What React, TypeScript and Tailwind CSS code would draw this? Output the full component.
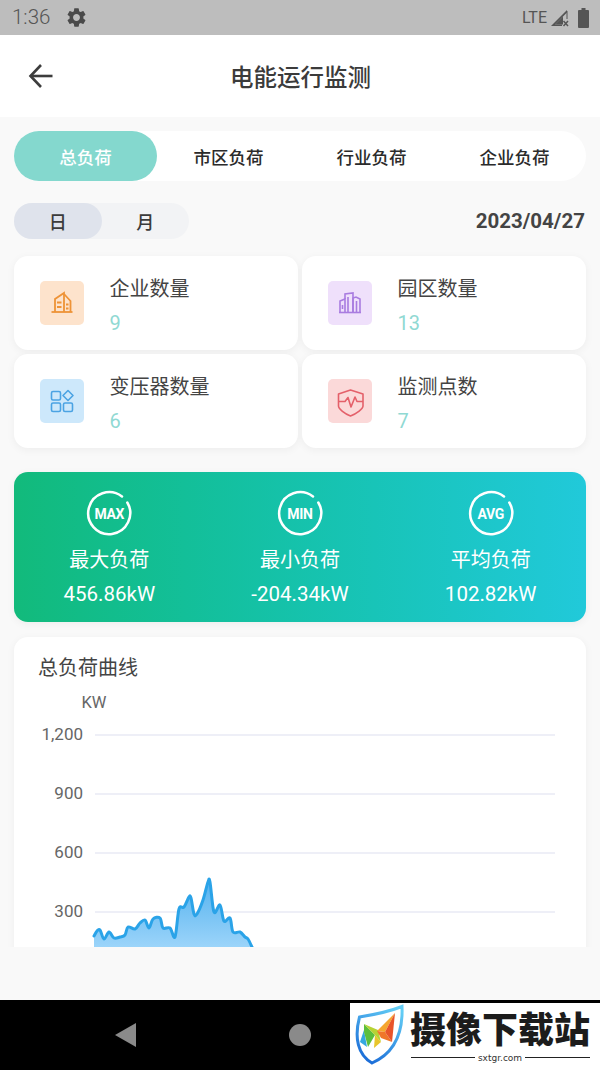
import React from 'react';
import { MdSettings } from 'react-icons/md';

const FONT = "font-['Roboto','Noto_Sans_CJK_SC',sans-serif]";

const tabs = ['总负荷', '市区负荷', '行业负荷', '企业负荷'];

const BuildingIcon = () => (
  <svg width="44" height="44" viewBox="0 0 44 44" fill="none" stroke="#ee9337" strokeWidth="1.800">
    <path d="M11.500 31h21" />
    <path d="M15 31V18l9-6v19" />
    <path d="M24 13l6.500 7v11" />
    <path d="M17 21.500h4.500M17 26h4.500M26 23.500h2.500M26 27.500h2.500" />
  </svg>
);

const CityIcon = () => (
  <svg width="44" height="44" viewBox="0 0 44 44" fill="none" stroke="#a97ce0" strokeWidth="1.600">
    <path d="M11 31.500h22" />
    <path d="M12 31V20l5-2v13" />
    <path d="M17 18v-5l8-1v19" />
    <path d="M25 31V17l3-1 4 2v13" />
    <path d="M14.500 24v4M20 16v15M28.500 20v11" />
  </svg>
);

const GridIcon = () => (
  <svg width="44" height="44" viewBox="0 0 44 44" fill="none" stroke="#4ba3e3" strokeWidth="1.600">
    <rect x="11.500" y="12.500" width="9" height="8.500" rx="1.500" />
    <rect x="11.500" y="24" width="9" height="8.500" rx="1.500" />
    <rect x="23.500" y="24" width="9" height="8.500" rx="1.500" />
    <path d="M28 11.500l5 5-5 5-5-5z" strokeLinejoin="round" />
  </svg>
);

const ShieldIcon = () => (
  <svg width="44" height="44" viewBox="0 0 44 44" fill="none" stroke="#e4606a" strokeWidth="1.600" strokeLinejoin="round">
    <path d="M22.500 11l12.500 4v12c0 3-7 8-12.500 10C17 35 10.500 30 10.500 27V15z" />
    <path d="M11 22.500h6l3-4 3 9.500 4-10 2 4.500h6" />
  </svg>
);

const stats = [
  { label: '企业数量', value: '9', bg: 'bg-[#fde3cc]', icon: <BuildingIcon /> },
  { label: '园区数量', value: '13', bg: 'bg-[#efe0fb]', icon: <CityIcon /> },
  { label: '变压器数量', value: '6', bg: 'bg-[#cde8fb]', icon: <GridIcon /> },
  { label: '监测点数', value: '7', bg: 'bg-[#fbd9d9]', icon: <ShieldIcon /> },
];

const loads = [
  { tag: 'MAX', label: '最大负荷', value: '456.86kW' },
  { tag: 'MIN', label: '最小负荷', value: '-204.34kW' },
  { tag: 'AVG', label: '平均负荷', value: '102.82kW' },
];

const gridLines = [
  { y: 735, label: '1,200' },
  { y: 794, label: '900' },
  { y: 853, label: '600' },
  { y: 912, label: '300' },
];

// curve samples in page coordinates
const outline = [
  [94, 936], [97, 931], [100, 930], [104, 939], [109, 932], [114, 938], [120, 937], [125, 935], [128, 927],
  [135, 929], [140, 923], [145, 920], [149, 928], [153, 919], [160, 918], [163, 928], [170, 928], [175, 937],
  [179, 909], [184, 907], [189, 897], [191, 898], [194, 914], [197, 914], [203, 900], [208, 882], [210, 882],
  [214, 912], [220, 905], [224, 921], [230, 918], [233, 932], [240, 932], [245, 937], [248, 939], [252, 947],
];

const smooth = (pts: number[][]) => {
  let d = `M${pts[0][0]} ${pts[0][1]}`;
  for (let i = 0; i < pts.length - 1; i++) {
    const p0 = pts[Math.max(i - 1, 0)];
    const p1 = pts[i];
    const p2 = pts[i + 1];
    const p3 = pts[Math.min(i + 2, pts.length - 1)];
    const c1x = p1[0] + (p2[0] - p0[0]) / 6;
    const c1y = p1[1] + (p2[1] - p0[1]) / 6;
    const c2x = p2[0] - (p3[0] - p1[0]) / 6;
    const c2y = p2[1] - (p3[1] - p1[1]) / 6;
    d += ` C${c1x} ${c1y} ${c2x} ${c2y} ${p2[0]} ${p2[1]}`;
  }
  return d;
};

const linePath = smooth(outline);

const Ring = ({ tag }: { tag: string }) => (
  <div className="relative w-[46px] h-[46px] flex items-center justify-center">
    <svg className="absolute inset-0" width="46" height="46" viewBox="0 0 46 46" fill="none" stroke="#ffffff" strokeWidth="2.500" strokeLinecap="round">
      <path d="M36 6.500A21 21 0 1 0 41.300 12.500" />
    </svg>
    <span className="text-white text-[14px] font-bold leading-none tracking-[-0.3px] pt-[1px]">{tag}</span>
  </div>
);

export default function App() {
  return (
    <div className={`${FONT} relative w-[600px] h-[1070px] flex flex-col overflow-hidden bg-[#f9f9f9]`}>
      <div className="h-[35px] shrink-0 bg-[#bdbdbd] flex items-center pl-[12px] pr-[11px] text-[#555]">
        <span className="text-[20.500px] leading-none font-light">1:36</span>
        <MdSettings className="ml-[15px] w-[23px] h-[23px] text-[#4a4a4a]" />
        <span className="ml-auto text-[16px] leading-none">LTE</span>
        <svg className="ml-[3px]" width="20" height="20" viewBox="0 0 20 20" fill="#555">
          <path d="M1 18L17 2v2.500L5 16.500h7V18z" />
          <path d="M5 16.500L13 8.500v8z" />
          <path d="M17 3v8" stroke="#555" strokeWidth="1" />
          <path d="M13.500 13l4.500 5M18 13l-4.500 5" stroke="#555" strokeWidth="1.500" />
        </svg>
        <svg className="ml-[8px]" width="11" height="20" viewBox="0 0 11 20" fill="#555">
          <path d="M3.500 0h4v2H10a1 1 0 0 1 1 1v16a1 1 0 0 1-1 1H1a1 1 0 0 1-1-1V3a1 1 0 0 1 1-1h2.500z" />
        </svg>
      </div>

      <div className="h-[82px] shrink-0 bg-white relative flex items-center justify-center">
        <svg className="absolute left-[28px] top-[28px]" width="26" height="26" viewBox="0 0 26 26" fill="none" stroke="#3d3d3d" strokeWidth="2.600">
          <path d="M24.500 13H3" />
          <path d="M13 2L2.500 13 13 24" />
        </svg>
        <span className="text-[23.500px] font-medium text-[#3b3b3b] pt-[6px] ml-[1px]">电能运行监测</span>
      </div>

      <div className="h-[830px] shrink-0 overflow-hidden px-[14px] pt-[14px] flex flex-col">
        <div className="h-[50px] shrink-0 rounded-full bg-white grid grid-cols-4">
          {tabs.map((tab, i) => (
            <div
              key={tab}
              className={`flex items-center justify-center rounded-full text-[17.500px] font-medium pt-[5px] ${
                i === 0 ? 'bg-[#84d8ce] text-white' : 'text-[#2b2b2b]'
              }`}
            >
              {tab}
            </div>
          ))}
        </div>

        <div className="mt-[22px] h-[36px] shrink-0 flex items-center justify-between">
          <div className="w-[175px] h-full rounded-full bg-[#f2f3f5] grid grid-cols-2 text-[18px] font-medium text-[#3b3b3b]">
            <div className="rounded-full bg-[#dfe3ec] flex items-center justify-center pt-[2px]">日</div>
            <div className="flex items-center justify-center pt-[2px]">月</div>
          </div>
          <span className="text-[20.500px] font-bold text-[#444] mr-[1px]">2023/04/27</span>
        </div>

        <div className="mt-[17px] grid grid-cols-2 gap-[4px] shrink-0">
          {stats.map((s) => (
            <div key={s.label} className="h-[94px] rounded-[14px] bg-white shadow-[0_2px_8px_rgba(0,0,0,0.05)] flex items-center pl-[25.500px]">
              <div className={`w-[44px] h-[44px] rounded-[5px] flex items-center justify-center ${s.bg}`}>{s.icon}</div>
              <div className="ml-[26px] flex flex-col pt-[6px]">
                <span className="text-[20px] leading-[28px] text-[#444]">{s.label}</span>
                <span className="mt-[6px] text-[20px] leading-[28px] text-[#90d9d3]">{s.value}</span>
              </div>
            </div>
          ))}
        </div>

        <div className="mt-[24px] h-[150px] shrink-0 rounded-[14px] bg-gradient-to-r from-[#12ba7b] to-[#21c9da] shadow-[0_2px_8px_rgba(0,0,0,0.05)] grid grid-cols-3 pt-[18px] text-white">
          {loads.map((l) => (
            <div key={l.tag} className="flex flex-col items-center">
              <Ring tag={l.tag} />
              <span className="mt-[10px] text-[20px] leading-[28px]">{l.label}</span>
              <span className="mt-[7px] text-[20.500px] leading-[26px]">{l.value}</span>
            </div>
          ))}
        </div>

        <div className="mt-[15px] h-[400px] shrink-0 rounded-[14px] bg-white shadow-[0_2px_8px_rgba(0,0,0,0.05)] pt-[18px] pl-[24px]">
          <div className="text-[20px] leading-[26px] text-[#444]">总负荷曲线</div>
          <svg className="block -ml-[24px]" width="572" height="340" viewBox="14 681 572 340">
            <defs>
              <linearGradient id="area" x1="0" y1="0" x2="0" y2="1">
                <stop offset="0" stopColor="#53b1ee" />
                <stop offset="1" stopColor="#a9dbfc" />
              </linearGradient>
            </defs>
            <text x="81.500" y="708" fontSize="16.500" fill="#666">KW</text>
            {gridLines.map((g) => (
              <g key={g.y}>
                <line x1="95" x2="555" y1={g.y} y2={g.y} stroke="#e8eaf4" strokeWidth="1.500" />
                <text x="83" y={g.y + 5} fontSize="17" fill="#666" textAnchor="end">{g.label}</text>
              </g>
            ))}
            <path d={`${linePath} L252 960 L94 960 Z`} fill="url(#area)" />
            <path d={linePath} fill="none" stroke="#2aa3e8" strokeWidth="3" strokeLinejoin="round" strokeLinecap="round" />
          </svg>
        </div>
      </div>

      <div className="flex-1" />

      <div className="h-[70px] shrink-0 bg-black flex items-center">
        <svg className="ml-[114px]" width="22" height="26" viewBox="0 0 22 26" fill="#8a8a8a">
          <path d="M22 1v24L1 13z" />
        </svg>
        <div className="ml-[153px] w-[22px] h-[22px] rounded-full bg-[#8a8a8a]" />
      </div>

      <div className="absolute left-[350px] top-[1003px] w-[250px] h-[67px] bg-white flex items-center">
        <svg className="shrink-0" width="60" height="67" viewBox="0 3 60 67">
          <defs>
            <linearGradient id="shield" x1="0.800" y1="0" x2="0.300" y2="1">
              <stop offset="0" stopColor="#63cdf5" />
              <stop offset="1" stopColor="#1c6ed8" />
            </linearGradient>
          </defs>
          <path d="M9.500 17C22 15 38 12 52 6.500C53 30 47 52 22 63C8 55 4 38 9.500 17z" fill="#fff" stroke="url(#shield)" strokeWidth="3" />
          <path d="M10 42L14 30L17 47z" fill="#35a8e0" />
          <path d="M14 24L25 35L18 47L14 32z" fill="#5cbf3c" />
          <path d="M14 24L28 30L31 42L25 35z" fill="#b7d334" />
          <path d="M25 35L31 42L24 48z" fill="#e8c52c" />
          <path d="M27 31L45 13L35 32z" fill="#f5a62e" />
          <path d="M27 31L35 32L42 42L31 38z" fill="#f0762a" />
          <path d="M45 13L42 42L35 32z" fill="#e8542a" />
        </svg>
        <div className="flex flex-col items-center">
          <span className="text-[36px] leading-[40px] font-black text-[#1c1c1c] whitespace-nowrap">摄像下载站</span>
          <div className="mt-[2px] w-[179px] flex items-center gap-[3px]">
            <div className="flex-1 h-[1.500px] bg-[#222]" />
            <span className="text-[9px] leading-[10px] text-[#333] font-['DejaVu_Sans',sans-serif]">sxtgr.com</span>
            <div className="flex-1 h-[1.500px] bg-[#222]" />
          </div>
        </div>
      </div>
    </div>
  );
}
